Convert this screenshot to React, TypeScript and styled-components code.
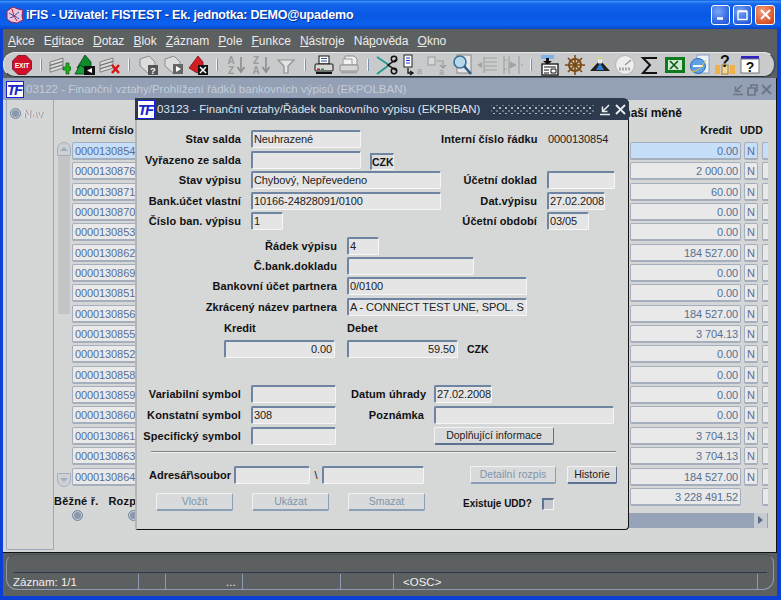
import React from "react";
import styled, { createGlobalStyle } from "styled-components";

const Global = createGlobalStyle`
  html, body { margin: 0; padding: 0; background: #5c6060; overflow: hidden; }
  body { font-family: "Liberation Sans", Arial, sans-serif; font-size: 11px; color: #111; }
`;

const Screen = styled.div`
  position: relative;
  width: 781px;
  height: 600px;
  display: flex;
  flex-direction: column;
  overflow: hidden;
  background: #0b3fd6;
`;

/* ---------- XP title bar ---------- */
const TitleBar = styled.header`
  height: 29px;
  flex: none;
  display: flex;
  align-items: center;
  padding: 0 6px 0 5px;
  background: linear-gradient(180deg, #0a56e0 0, #3a8ff6 5%, #1264ea 14%, #0a58e3 50%, #0b62ee 85%, #0846c8 100%);
`;
const AppTitle = styled.span`
  margin-left: 1px;
  flex: 1;
  color: #fff;
  font-weight: 700;
  font-size: 12.5px;
  letter-spacing: -0.2px;
  text-shadow: 1px 1px 0 #0a2f9a;
`;
const CaptionButtons = styled.div`
  display: flex;
  gap: 3px;
`;
const CaptionButton = styled.div<{ $close?: boolean }>`
  width: ${(p) => (p.$close ? 20 : 19)}px;
  height: 20px;
  box-sizing: border-box;
  border: 1px solid #fff;
  border-radius: 3px;
  display: flex;
  align-items: center;
  justify-content: center;
  background: ${(p) =>
    p.$close
      ? "radial-gradient(circle at 35% 30%, #f2a080 0, #e0643a 55%, #c63a14 100%)"
      : "radial-gradient(circle at 35% 30%, #7ba6f5 0, #3a70e6 55%, #1f4fd0 100%)"};
`;

/* ---------- menu ---------- */
const MenuBar = styled.nav`
  height: 23px;
  flex: none;
  margin: 0 4px 0 3px;
  display: flex;
  align-items: center;
  gap: 9.1px;
  padding-left: 5px;
  background: #5c6060;
  color: #ececec;
  font-size: 12px;
`;
const Under = styled.span`
  text-decoration: underline;
`;

/* ---------- toolbar ---------- */
const ToolbarWrap = styled.div`
  height: 26px;
  flex: none;
  margin: 0 4px 0 3px;
  padding-right: 1px;
  background: #5c6060;
`;
const Toolbar = styled.div`
  height: 25px;
  box-sizing: border-box;
  display: flex;
  align-items: center;
  padding-left: 5px;
  background: #c9cacb;
  border: 1px solid #e4e6e8;
  border-bottom: 1px solid #26313f;
  border-right: 2px solid #46505e;
  border-radius: 12px;
`;
const ToolSlot = styled.div`
  width: 25px;
  height: 22px;
  flex: none;
  display: flex;
  align-items: center;
  justify-content: center;
`;
const ToolSep = styled.div`
  width: 13px;
  flex: none;
  display: flex;
  justify-content: center;
  &::before {
    content: "";
    width: 1px;
    height: 12px;
    background: #7f92ad;
    border-left: 1px solid #f2f4f7;
  }
`;

/* ---------- MDI window ---------- */
const Client = styled.div`
  flex: 1;
  min-height: 0;
  display: flex;
  flex-direction: column;
  margin: 0 4px 4px 3px;
`;
const MdiWindow = styled.section`
  height: 475px;
  flex: none;
  box-sizing: border-box;
  display: flex;
  flex-direction: column;
  background: #d5d6d6;
  border-right: 1px solid #111;
  border-bottom: 1px solid #111;
`;
const MdiTitle = styled.div`
  height: 22px;
  flex: none;
  display: flex;
  align-items: center;
  padding: 0 3px 0 3px;
  background: #93a0b5;
  color: #c4ccd8;
  font-size: 11.5px;
  gap: 2px;
`;
const TitleText = styled.span`
  flex: 1;
  white-space: nowrap;
`;
const LogoBox = styled.span<{ $w: number; $h: number }>`
  width: ${(p) => p.$w}px;
  height: ${(p) => p.$h}px;
  box-sizing: border-box;
  flex: none;
  display: flex;
  align-items: center;
  justify-content: center;
  background: #fff;
  border: 1px solid #1a22d0;
  color: #1628c8;
  font: italic 700 15px/1 "Liberation Sans", Arial, sans-serif;
  letter-spacing: -2px;
  padding-right: 2px;
`;
const WindowButtons = styled.div<{ $gap: number }>`
  display: flex;
  align-items: center;
  gap: ${(p) => p.$gap}px;
`;

const MdiBody = styled.div`
  flex: 1;
  min-height: 0;
  display: flex;
  padding-left: 3px;
`;
const NavPanel = styled.aside`
  width: 48px;
  height: 450px;
  flex: none;
  box-sizing: border-box;
  border: 1px solid #9aa8c0;
  border-top: none;
  border-radius: 0 0 2px 2px;
  padding: 8px 0 0 3px;
  display: flex;
  align-items: flex-start;
  gap: 2px;
  color: #e6e8ec;
  font-size: 11px;
  line-height: 12px;
  text-shadow: 1px 0 0 #7d8a9e;
`;
const Radio = styled.span`
  display: inline-block;
  width: 11px;
  height: 11px;
  flex: none;
  box-sizing: border-box;
  border-radius: 50%;
  background: #8a98ac;
  border: 1px solid #7c8ba2;
  box-shadow: inset 0 0 0 1px #c7ced8;
`;
const GridArea = styled.div`
  margin-left: 3px;
  width: 711px;
  padding-top: 6px;
  display: flex;
  flex-direction: column;
`;
const HeadLine = styled.div`
  height: 14px;
  padding-right: 86px;
  text-align: right;
  font-weight: 700;
  font-size: 12px;
  line-height: 14px;
  white-space: nowrap;
`;
const ColumnHead = styled.div`
  margin-top: 3px;
  margin-bottom: 5px;
  height: 14px;
  padding-left: 15px;
  display: flex;
  font-weight: 700;
  font-size: 11px;
  line-height: 14px;
  white-space: nowrap;
`;
const HeadSpacer = styled.span`
  flex: 1;
`;
const HeadKredit = styled.span`
  width: 101px;
  text-align: right;
  padding-right: 8px;
`;
const HeadUdd = styled.span`
  width: 28px;
  font-size: 10.5px;
`;
const GridRows = styled.div`
  display: flex;
  align-items: flex-start;
  gap: 1px;
`;
const VScroll = styled.div`
  width: 14px;
  height: 345px;
  flex: none;
  display: flex;
  flex-direction: column;
`;
const ScrollArrow = styled.div<{ $down?: boolean }>`
  width: 14px;
  height: 14px;
  flex: none;
  box-sizing: border-box;
  background: #cdd0d4;
  border: 1px solid #a3aebf;
  border-radius: ${(p) => (p.$down ? "1px 1px 7px 7px" : "7px 7px 1px 1px")};
  display: flex;
  align-items: center;
  justify-content: center;
  margin-top: ${(p) => (p.$down ? "auto" : "0")};
  &::after {
    content: "";
    border-left: 4px solid transparent;
    border-right: 4px solid transparent;
    ${(p) => (p.$down ? "border-top: 4px solid #a2adbd;" : "border-bottom: 4px solid #a2adbd;")}
  }
`;
const VThumb = styled.div`
  width: 12px;
  height: 158px;
  margin: 0 1px;
  background: #c3c4c5;
`;
const Rows = styled.div`
  flex: 1;
  display: flex;
  flex-direction: column;
  gap: 2.35px;
`;
const Row = styled.div`
  height: 18px;
  display: flex;
`;
const Cell = styled.div<{ $w?: number; $active?: boolean; $right?: boolean; $empty?: boolean }>`
  width: ${(p) => p.$w ?? 64}px;
  height: 18px;
  flex: none;
  box-sizing: border-box;
  padding: 0 2px;
  line-height: 16px;
  font-size: 11px;
  letter-spacing: -0.1px;
  color: #566f94;
  text-align: ${(p) => (p.$right ? "right" : "left")};
  white-space: nowrap;
  overflow: hidden;
  background: ${(p) => (p.$active ? "#c7def9" : "#e9e9ea")};
  border: 1px solid #a4aebc;
  border-bottom: 2px solid #a4aebc;
  border-radius: 2px;
  visibility: ${(p) => (p.$empty ? "hidden" : "visible")};
`;
const RowGap = styled.span`
  flex: 1;
`;
const KreditCell = styled(Cell)`
  margin-right: 3px;
`;
const FlagCell = styled(Cell)`
  margin-right: 4px;
  text-align: center;
`;
const TailCell = styled(Cell)`
  border-right: none;
  border-radius: 2px 0 0 2px;
`;
const RadioLabels = styled.div`
  width: 120px;
  margin: 0 0 -2px -18px;
  display: flex;
  gap: 10px;
  align-items: flex-end;
  font-weight: 700;
  font-size: 11px;
  letter-spacing: 0.2px;
  line-height: 14px;
  white-space: nowrap;
`;
const BottomRow = styled.div`
  margin-top: 7px;
  height: 15px;
  display: flex;
  align-items: flex-start;
`;
const RadioSlot = styled.div`
  width: 56px;
  height: 11px;
  margin-top: -3px;
  flex: none;
  &:first-child {
    margin-left: 15px;
  }
`;
const HScroll = styled.div`
  flex: 1;
  height: 15px;
  background: #96a3b8;
  display: flex;
  justify-content: flex-end;
`;
const HArrow = styled.div`
  width: 13px;
  height: 15px;
  margin-right: 1px;
  background: #c6cbd2;
  display: flex;
  align-items: center;
  justify-content: center;
  &::after {
    content: "";
    border-top: 4px solid transparent;
    border-bottom: 4px solid transparent;
    border-left: 5px solid #5a6b86;
  }
`;

/* ---------- status bar ---------- */
const StatusBar = styled.footer`
  flex: 1;
  min-height: 0;
  background: #5c6060;
  padding: 1px 3px 0 3px;
`;
const StatusFrame = styled.div`
  height: 36px;
  box-sizing: border-box;
  padding: 17px 6px 0 6px;
  border: 1px solid #8c9bb0;
  border-top: 1px solid #47505c;
  border-radius: 9px 9px 11px 11px;
`;
const StatusCells = styled.div`
  height: 17px;
  border-top: 1px solid #2c3748;
  display: flex;
  color: #f0f0f0;
  font-size: 11.5px;
  line-height: 18px;
`;
const StatusCell = styled.div<{ $w: number; $pad?: number }>`
  width: ${(p) => p.$w}px;
  flex: none;
  box-sizing: border-box;
  padding-left: ${(p) => p.$pad ?? 0}px;
  height: 15px;
  margin-top: 1px;
  line-height: 16px;
  border-right: 1px solid #8c9bb0;
  white-space: nowrap;
`;

/* ---------- dialog ---------- */
const Dialog = styled.section`
  position: absolute;
  left: 135px;
  top: 98px;
  width: 494px;
  height: 432px;
  box-sizing: border-box;
  display: flex;
  flex-direction: column;
  background: #d6d7d7;
  border-left: 2px solid #b3b5b8;
  border-right: 1px solid #111;
  border-bottom: 1px solid #111;
  border-radius: 0 6px 4px 2px;
`;
const DialogTitle = styled.div`
  height: 22px;
  margin-left: -2px;
  margin-right: -1px;
  flex: none;
  display: flex;
  align-items: center;
  padding: 0 3px 0 2px;
  gap: 2px;
  background: #2d394c;
  color: #dfe4ea;
  font-size: 11.5px;
  border-radius: 0 6px 0 0;
  white-space: nowrap;
`;
const DotStrip = styled.span`
  width: 104px;
  height: 9px;
  margin-left: 9px;
  margin-right: 2px;
  flex: none;
  background-image: radial-gradient(circle, #aab3c0 0.8px, transparent 1px),
    radial-gradient(circle, #6b7789 0.8px, transparent 1px);
  background-size: 6px 6px;
  background-position: 0 0, 3px 3px;
`;
const Section = styled.div<{ $top: number; $left?: number }>`
  padding-top: ${(p) => p.$top}px;
  padding-left: ${(p) => p.$left ?? 0}px;
  display: flex;
`;
const Stack = styled.div<{ $gap: number; $w?: number }>`
  display: flex;
  flex-direction: column;
  gap: ${(p) => p.$gap}px;
  flex: none;
  ${(p) => (p.$w ? `width: ${p.$w}px;` : "")}
`;
const FieldRow = styled.div`
  height: 18px;
  display: flex;
  align-items: center;
`;
const Label = styled.label<{ $w: number }>`
  width: ${(p) => p.$w}px;
  flex: none;
  margin-right: 10px;
  text-align: right;
  font-weight: 700;
  font-size: 11px;
  letter-spacing: 0.1px;
  line-height: 14px;
  white-space: nowrap;
`;
const Field = styled.div<{ $w: number; $right?: boolean }>`
  width: ${(p) => p.$w}px;
  height: 18px;
  flex: none;
  box-sizing: border-box;
  padding: 0 2px 0 1px;
  line-height: 15px;
  font-size: 11px;
  letter-spacing: -0.1px;
  color: #222;
  background: #e5e5e6;
  text-align: ${(p) => (p.$right ? "right" : "left")};
  white-space: nowrap;
  overflow: hidden;
  border-top: 2px solid #6f84a3;
  border-left: 2px solid #6f84a3;
  border-right: 1px solid #f6f6f6;
  border-bottom: 1px solid #f6f6f6;
  border-radius: 2px;
`;
const PlainValue = styled.span`
  margin-left: 1px;
  font-size: 11px;
  letter-spacing: -0.1px;
  color: #222;
`;
const CurrencyBox = styled.div`
  margin: 4px 0 0 9px;
  width: 24px;
  height: 17px;
  box-sizing: border-box;
  text-align: center;
  font-weight: 700;
  font-size: 10.5px;
  line-height: 14px;
  background: #dcdcdd;
  border-top: 2px solid #6f84a3;
  border-left: 2px solid #6f84a3;
  border-right: 1px solid #f6f6f6;
  border-bottom: 1px solid #f6f6f6;
`;
const HeadingRow = styled.div`
  padding: 5px 0 5px 87px;
  display: flex;
  font-weight: 700;
  font-size: 11px;
  line-height: 14px;
`;
const HeadingCell = styled.span<{ $w: number }>`
  width: ${(p) => p.$w}px;
`;
const AmountRow = styled.div`
  padding-left: 87px;
  display: flex;
  align-items: center;
  gap: 12px;
`;
const Unit = styled.span`
  margin-left: -3px;
  font-weight: 700;
  font-size: 10.5px;
`;
const Divider = styled.hr`
  margin: 6px 12px 0 14px;
  height: 1px;
  border: none;
  background: #7c7f84;
  box-shadow: 0 1px 0 #f2f2f2;
`;
const FileRow = styled.div`
  padding: 14px 0 0 12px;
  height: 18px;
  display: flex;
  align-items: center;
`;
const FileLabel = styled.label`
  width: 85px;
  flex: none;
  font-weight: 700;
  font-size: 11px;
  white-space: nowrap;
`;
const Backslash = styled.span`
  width: 12px;
  flex: none;
  text-align: center;
`;
const Btn = styled.button<{ $w: number; $off?: boolean; $left?: number }>`
  width: ${(p) => p.$w}px;
  height: 18px;
  flex: none;
  padding: 0;
  margin-left: ${(p) => p.$left ?? 0}px;
  background: #d9dadb;
  font: 10.5px/1 "Liberation Sans", Arial, sans-serif;
  color: ${(p) => (p.$off ? "#8194ac" : "#222")};
  border-top: 1px solid #f2f2f2;
  border-left: 1px solid #f2f2f2;
  border-right: 1px solid ${(p) => (p.$off ? "#8c9db6" : "#5d7290")};
  border-bottom: 2px solid ${(p) => (p.$off ? "#8c9db6" : "#5d7290")};
  border-radius: 2px;
`;
const ActionRow = styled.div`
  padding: 9px 0 0 19px;
  display: flex;
  align-items: flex-start;
  gap: 19px;
`;
const UddGroup = styled.div`
  margin: 5px 0 0 19px;
  display: flex;
  align-items: center;
  gap: 10px;
  font-weight: 700;
  font-size: 10px;
`;
const CheckBox = styled.span`
  width: 12px;
  height: 12px;
  box-sizing: border-box;
  background: #c5c8cc;
  border-top: 2px solid #60748f;
  border-left: 2px solid #60748f;
  border-right: 1px solid #f4f4f4;
  border-bottom: 1px solid #f4f4f4;
`;

/* ---------- drawn icons ---------- */
const Ico: React.FC<{ children: React.ReactNode }> = ({ children }) => (
  <svg width="22" height="22" viewBox="0 0 22 22">
    {children}
  </svg>
);
const Stackd: React.FC<{ fill?: string; line?: string }> = ({ fill = "#d9d9d9", line = "#6d6d6d" }) => (
  <path
    d="M1 8l13-4v3.4L1 11.4zM1 11.4l13-4v3.4L1 14.8zM1 14.8l13-4v3.4L1 18.2z"
    fill={fill}
    stroke={line}
    strokeWidth="0.8"
  />
);
const GrayDoc = () => (
  <path d="M3 5l9-3 6 6v10l-6 2-9-8z" fill="#dcdcdc" stroke="#8b8b8b" strokeWidth="1" />
);

const icons: Record<string, React.ReactNode> = {
  exit: (
    <Ico>
      <path d="M7 1.5h8L20.5 7v8L15 20.5H7L1.5 15V7z" fill="#d0102a" stroke="#7a0a18" strokeWidth="0.8" />
      <text x="11" y="13.6" textAnchor="middle" fontSize="6.6" fontWeight="700" fill="#fff" fontFamily="Liberation Sans">
        EXIT
      </text>
    </Ico>
  ),
  add: (
    <Ico>
      <Stackd />
      <path d="M14 13h3v-4h3v4h2v3h-2v4h-3v-4h-3z" fill="#20b020" stroke="#0b5a0b" strokeWidth="0.7" />
    </Ico>
  ),
  dup: (
    <Ico>
      <path d="M3 14L11 1l6 7v6z" fill="#0f8a2a" stroke="#063d12" strokeWidth="0.8" />
      <path d="M1 20l5-9 6 4v5z" fill="#1aa03a" stroke="#063d12" strokeWidth="0.8" />
      <rect x="10" y="12" width="11" height="9" fill="#111" />
      <path d="M18 14v5l-5-2.5z" fill="#fff" />
    </Ico>
  ),
  del: (
    <Ico>
      <Stackd />
      <path d="M13 11l7 8M20 11l-7 8" stroke="#d81212" strokeWidth="2.4" />
    </Ico>
  ),
  qEnter: (
    <Ico>
      <GrayDoc />
      <rect x="11" y="11" width="10" height="10" fill="#555" />
      <text x="16" y="19.5" textAnchor="middle" fontSize="9.5" fontWeight="700" fill="#fff" fontFamily="Liberation Sans">
        ?
      </text>
    </Ico>
  ),
  qRun: (
    <Ico>
      <GrayDoc />
      <rect x="11" y="10" width="10" height="10" fill="#666" />
      <path d="M14 12l5 3-5 3z" fill="#fff" />
    </Ico>
  ),
  qCancel: (
    <Ico>
      <path d="M2 14L11 2l5 6v6l-6 5z" fill="#d41c24" stroke="#7a1014" strokeWidth="0.8" />
      <rect x="11" y="11" width="10" height="10" fill="#111" />
      <path d="M13 13l6 6M19 13l-6 6" stroke="#fff" strokeWidth="1.5" />
    </Ico>
  ),
  sortAz: (
    <Ico>
      <text x="6" y="10" textAnchor="middle" fontSize="10" fontWeight="700" fill="#9a9a9a" fontFamily="Liberation Sans">
        A
      </text>
      <text x="6" y="20" textAnchor="middle" fontSize="10" fontWeight="700" fill="#9a9a9a" fontFamily="Liberation Sans">
        Z
      </text>
      <path d="M16 3v13M12.5 13l3.5 5 3.5-5" fill="none" stroke="#8d8d8d" strokeWidth="1.6" />
    </Ico>
  ),
  sortZa: (
    <Ico>
      <text x="6" y="10" textAnchor="middle" fontSize="10" fontWeight="700" fill="#9a9a9a" fontFamily="Liberation Sans">
        Z
      </text>
      <text x="6" y="20" textAnchor="middle" fontSize="10" fontWeight="700" fill="#9a9a9a" fontFamily="Liberation Sans">
        A
      </text>
      <path d="M16 3v13M12.5 13l3.5 5 3.5-5" fill="none" stroke="#8d8d8d" strokeWidth="1.6" />
    </Ico>
  ),
  funnel: (
    <Ico>
      <path d="M3 6h16l-6 6v7h-4v-7z" fill="#e4e4e4" stroke="#8f8f8f" strokeWidth="1.2" />
    </Ico>
  ),
  printer: (
    <Ico>
      <rect x="6" y="2" width="10" height="8" fill="#fff" stroke="#111" />
      <path d="M8 4.5h6M8 7h6" stroke="#2c50a0" />
      <rect x="2" y="10" width="18" height="7" rx="1" fill="#d7d7d7" stroke="#111" />
      <rect x="4" y="14.5" width="3" height="1.5" fill="#c02020" />
      <rect x="8" y="14.5" width="3" height="1.5" fill="#20a020" />
      <rect x="3" y="18" width="16" height="2" fill="#111" />
    </Ico>
  ),
  printer2: (
    <Ico>
      <path d="M7 2h9l3 3v6H7z" fill="#eee" stroke="#8d8d8d" />
      <path d="M5 5h9v6H5z" fill="#f3f3f3" stroke="#999" />
      <rect x="2" y="11" width="18" height="6" rx="1" fill="#d7d7d7" stroke="#8a8a8a" />
      <rect x="3" y="17.5" width="16" height="2" fill="#a5a5a5" />
    </Ico>
  ),
  cut: (
    <Ico>
      <path d="M1 3l12 8-12 9" fill="none" stroke="#1d9a8c" strokeWidth="1.8" />
      <path d="M21 5l-9 6 9 6" fill="none" stroke="#111" strokeWidth="1.5" />
      <circle cx="18" cy="5" r="2.7" fill="none" stroke="#111" strokeWidth="1.5" />
      <circle cx="18" cy="17" r="2.7" fill="none" stroke="#111" strokeWidth="1.5" />
    </Ico>
  ),
  copy: (
    <Ico>
      <rect x="3" y="1" width="8" height="12" fill="#fff" stroke="#222" />
      <path d="M5 4h4M5 6.5h4M5 9h4" stroke="#2030d0" />
      <path d="M7 14v5h4M9 17l3 2-3 2" fill="none" stroke="#111" strokeWidth="1.3" />
      <text x="16" y="20" fontSize="9" fill="#999" fontFamily="Liberation Sans">
        a
      </text>
    </Ico>
  ),
  paste: (
    <Ico>
      <rect x="2" y="3" width="7" height="8" fill="#d8d8d8" stroke="#9a9a9a" />
      <path d="M11 7h6v7M14 11l3 3 3-3" fill="none" stroke="#999" strokeWidth="1.2" />
      <text x="13" y="21" fontSize="9" fill="#999" fontFamily="Liberation Sans">
        a
      </text>
    </Ico>
  ),
  search: (
    <Ico>
      <rect x="6" y="1" width="14" height="18" fill="#e6e6e6" stroke="#888" />
      <circle cx="9" cy="8" r="6" fill="#b5d7ea" stroke="#3c6f96" strokeWidth="1.6" />
      <path d="M13 12l7 8" stroke="#2e5f8c" strokeWidth="2.6" />
    </Ico>
  ),
  tree1: (
    <Ico>
      <path d="M8 3v16M8 4h13M8 8h13M8 12h13M8 16h13" fill="none" stroke="#a2a2a2" strokeWidth="1.2" />
      <path d="M1 11l5-3v6z" fill="#a2a2a2" />
    </Ico>
  ),
  tree2: (
    <Ico>
      <path d="M3 2v18M8 2v18M18 2v18M3 6h3M3 15h3" fill="none" stroke="#a2a2a2" strokeWidth="1.2" />
      <path d="M9 8l6 3-6 3zM20 11h2" fill="#a2a2a2" stroke="#a2a2a2" />
    </Ico>
  ),
  card: (
    <Ico>
      <rect x="2" y="1" width="13" height="4" fill="#7fb2e8" />
      <path d="M7 4h3v3h3l-4.500 4L4 7h3z" fill="#111" />
      <rect x="3" y="10" width="16" height="11" fill="#fff" stroke="#111" strokeWidth="1.3" />
      <path d="M5 13h12M5 16h5M12 15h5v4h-5zM5 19h5" fill="none" stroke="#111" />
    </Ico>
  ),
  wheel: (
    <Ico>
      <circle cx="11" cy="11" r="6" fill="none" stroke="#7c4a10" strokeWidth="2" />
      <path d="M11 1v20M1 11h20M4 4l14 14M18 4L4 18" stroke="#7c4a10" strokeWidth="1.6" />
    </Ico>
  ),
  tri: (
    <Ico>
      <path d="M1 17L11 6l10 11z" fill="#222" />
      <path d="M7 16l4-7 4 7z" fill="#2f7fd8" />
      <path d="M9 5L11 3l2 2M3 11l2-1M19 11l-2-1" stroke="#e8dc30" fill="none" />
      <rect x="9" y="5.500" width="4" height="4" fill="#e7e7e7" />
    </Ico>
  ),
  gauge: (
    <Ico>
      <circle cx="11" cy="11" r="9.500" fill="#ededed" stroke="#b5b5b5" />
      <path d="M11 11l6-5" stroke="#999" strokeWidth="1.4" />
      <path d="M5 15h12" stroke="#aaa" strokeWidth="3" strokeDasharray="2 1" />
    </Ico>
  ),
  sigma: (
    <Ico>
      <path d="M18 4H4l7 7-7 8h14" fill="none" stroke="#111" strokeWidth="2" />
    </Ico>
  ),
  excel: (
    <Ico>
      <rect x="1" y="3" width="20" height="16" fill="#0f7a1c" />
      <rect x="4" y="6" width="14" height="10" fill="#cfe8d2" />
      <path d="M6 7l8 8M14 7l-8 8" stroke="#0f5a18" strokeWidth="1.6" />
    </Ico>
  ),
  ie: (
    <Ico>
      <rect x="8" y="1" width="12" height="18" fill="#eef3fa" stroke="#8aa0bf" />
      <circle cx="9" cy="12" r="7.500" fill="#5fa0e6" stroke="#2b6cbc" />
      <path d="M4 12h10" stroke="#fff" strokeWidth="2" />
      <path d="M3 17c4 2 10-4 14-11" fill="none" stroke="#e6c040" />
    </Ico>
  ),
  help: (
    <Ico>
      <rect x="1" y="11" width="5" height="9" fill="#efb24a" />
      <rect x="8" y="11" width="6" height="9" fill="#efd8a0" stroke="#b57f20" />
      <rect x="16" y="11" width="5" height="9" fill="#efb24a" />
      <text x="11" y="13" textAnchor="middle" fontSize="16" fontWeight="700" fill="#111" fontFamily="Liberation Sans">
        ?
      </text>
    </Ico>
  ),
  about: (
    <Ico>
      <rect x="2" y="2" width="18" height="3" fill="#3020c0" />
      <rect x="2" y="5" width="18" height="14" fill="#fff" stroke="#777" />
      <text x="11" y="18" textAnchor="middle" fontSize="14" fontWeight="700" fill="#111" fontFamily="Liberation Sans">
        ?
      </text>
    </Ico>
  ),
};

const toolbarLayout = [
  "exit", "|", "add", "dup", "del", "|", "qEnter", "qRun", "qCancel", "|", "sortAz", "sortZa", "funnel", "|",
  "printer", "printer2", "|", "cut", "copy", "paste", "search", "tree1", "tree2", "|", "card", "wheel", "tri",
  "gauge", "sigma", "excel", "ie", "help", "about",
];

const menu: [string, string, string][] = [
  ["", "A", "kce"],
  ["E", "d", "itace"],
  ["", "D", "otaz"],
  ["", "B", "lok"],
  ["", "Z", "áznam"],
  ["", "P", "ole"],
  ["", "F", "unkce"],
  ["", "N", "ástroje"],
  ["Ná", "p", "ověda"],
  ["", "O", "kno"],
];

const records: [string, string][] = [
  ["0000130854", "0.00"],
  ["0000130876", "2 000.00"],
  ["0000130871", "60.00"],
  ["0000130870", "0.00"],
  ["0000130853", "0.00"],
  ["0000130862", "184 527.00"],
  ["0000130869", "0.00"],
  ["0000130851", "0.00"],
  ["0000130856", "184 527.00"],
  ["0000130855", "3 704.13"],
  ["0000130852", "0.00"],
  ["0000130858", "0.00"],
  ["0000130859", "0.00"],
  ["0000130860", "0.00"],
  ["0000130861", "3 704.13"],
  ["0000130863", "3 704.13"],
  ["0000130864", "184 527.00"],
];

const MiniGlyph: React.FC<{ d: string; color: string; w?: number }> = ({ d, color, w = 2 }) => (
  <svg width="13" height="13" viewBox="0 0 13 13">
    <path d={d} fill="none" stroke={color} strokeWidth={w} />
  </svg>
);

const minimizeArrow = "M1 11.500h10M10 2L4 8M3.500 3.500V8.500H8.500";

export default function App() {
  return (
    <Screen>
      <Global />
      <TitleBar>
        <svg width="20" height="18" viewBox="0 0 20 18">
          <path d="M2 5l6-4 5 2 5 1-1 6 1 4-6 3-6-1-4-3z" fill="#e8c8d8" stroke="#a02050" />
          <path d="M4 7l5 3 5-4M5 12l5-2 4 3" fill="none" stroke="#4050c0" />
          <path d="M7 3l2 7 3 5" fill="none" stroke="#c01848" />
        </svg>
        <AppTitle>iFIS - Uživatel: FISTEST - Ek. jednotka: DEMO@upademo</AppTitle>
        <CaptionButtons>
          <CaptionButton>
            <MiniGlyph d="M3 10.500h6" color="#fff" w={2.5} />
          </CaptionButton>
          <CaptionButton>
            <MiniGlyph d="M2 3.500h9v8H2zM2 3h9" color="#fff" w={1.4} />
          </CaptionButton>
          <CaptionButton $close>
            <MiniGlyph d="M2 2l9 9M11 2l-9 9" color="#fff" w={2} />
          </CaptionButton>
        </CaptionButtons>
      </TitleBar>

      <MenuBar>
        {menu.map(([a, b, c]) => (
          <span key={a + b + c}>
            {a}
            <Under>{b}</Under>
            {c}
          </span>
        ))}
      </MenuBar>

      <ToolbarWrap>
        <Toolbar>
          {toolbarLayout.map((name, i) =>
            name === "|" ? <ToolSep key={i} /> : <ToolSlot key={i}>{icons[name]}</ToolSlot>
          )}
        </Toolbar>
      </ToolbarWrap>

      <Client>
        <MdiWindow>
          <MdiTitle>
            <LogoBox $w={18} $h={17}>TF</LogoBox>
            <TitleText>03122 - Finanční vztahy/Prohlížení řádků bankovních výpisů (EKPOLBAN)</TitleText>
            <WindowButtons $gap={1}>
              <MiniGlyph d={minimizeArrow} color="#6d7685" w={1.6} />
              <MiniGlyph d="M2 5h7v7H2zM5 5V2h6v6H9" color="#6d7685" w={1.6} />
              <MiniGlyph d="M2 2l9 9M11 2l-9 9" color="#6d7685" w={2} />
            </WindowButtons>
          </MdiTitle>
          <MdiBody>
            <NavPanel>
              <Radio />
              Nav
            </NavPanel>
            <GridArea>
              <HeadLine>v naší měně</HeadLine>
              <ColumnHead>
                Interní číslo
                <HeadSpacer />
                <HeadKredit>Kredit</HeadKredit>
                <HeadUdd>UDD</HeadUdd>
              </ColumnHead>
              <GridRows>
                <VScroll>
                  <ScrollArrow />
                  <VThumb />
                  <ScrollArrow $down />
                </VScroll>
                <Rows>
                  {records.map(([id, amount], i) => (
                    <Row key={id}>
                      <Cell $active={i === 0} $w={120}>{id}</Cell>
                      <RowGap />
                      <KreditCell $active={i === 0} $w={111} $right>{amount}</KreditCell>
                      <FlagCell $w={14} $active={i === 0}>N</FlagCell>
                      <TailCell $w={6} $active={i === 0} />
                    </Row>
                  ))}
                  <Row>
                    <RadioLabels>
                      <span>Běžné ř.</span>
                      <span>Rozpis</span>
                    </RadioLabels>
                    <RowGap />
                    <KreditCell $w={111} $right>3 228 491.52</KreditCell>
                    <FlagCell $w={14} $empty />
                    <TailCell $w={6} />
                  </Row>
                </Rows>
              </GridRows>
              <BottomRow>
                <RadioSlot><Radio /></RadioSlot>
                <RadioSlot><Radio /></RadioSlot>
                <HScroll>
                  <HArrow />
                </HScroll>
              </BottomRow>
            </GridArea>
          </MdiBody>
        </MdiWindow>
        <StatusBar>
          <StatusFrame>
            <StatusCells>
              <StatusCell $w={126}>Záznam: 1/1</StatusCell>
              <StatusCell $w={27} />
              <StatusCell $w={77} $pad={60}>...</StatusCell>
              <StatusCell $w={98} />
              <StatusCell $w={53} />
              <StatusCell $w={364} $pad={9}>&lt;OSC&gt;</StatusCell>
            </StatusCells>
          </StatusFrame>
        </StatusBar>
      </Client>

      <Dialog>
        <DialogTitle>
          <LogoBox $w={18} $h={19}>TF</LogoBox>
          03123 - Finanční vztahy/Řádek bankovního výpisu (EKPRBAN)
          <DotStrip />
          <WindowButtons $gap={2}>
            <MiniGlyph d={minimizeArrow} color="#e8ecf0" w={1.5} />
            <MiniGlyph d="M2 2l9 9M11 2l-9 9" color="#e8ecf0" w={1.8} />
          </WindowButtons>
        </DialogTitle>

        <Section $top={10}>
          <Stack $gap={2.5} $w={304}>
            <FieldRow><Label $w={104}>Stav salda</Label><Field $w={110}>Neuhrazené</Field></FieldRow>
            <FieldRow><Label $w={104}>Vyřazeno ze salda</Label><Field $w={110} /><CurrencyBox>CZK</CurrencyBox></FieldRow>
            <FieldRow><Label $w={104}>Stav výpisu</Label><Field $w={190}>Chybový, Nepřevedeno</Field></FieldRow>
            <FieldRow><Label $w={104}>Bank.účet vlastní</Label><Field $w={190}>10166-24828091/0100</Field></FieldRow>
            <FieldRow><Label $w={104}>Číslo ban. výpisu</Label><Field $w={32}>1</Field></FieldRow>
          </Stack>
          <Stack $gap={2.5}>
            <FieldRow><Label $w={96}>Interní číslo řádku</Label><PlainValue>0000130854</PlainValue></FieldRow>
            <FieldRow />
            <FieldRow><Label $w={96}>Účetní doklad</Label><Field $w={68} /></FieldRow>
            <FieldRow><Label $w={96}>Dat.výpisu</Label><Field $w={58}>27.02.2008</Field></FieldRow>
            <FieldRow><Label $w={96}>Účetní období</Label><Field $w={42}>03/05</Field></FieldRow>
          </Stack>
        </Section>

        <Section $top={7}>
          <Stack $gap={2.2}>
            <FieldRow><Label $w={200}>Řádek výpisu</Label><Field $w={32}>4</Field></FieldRow>
            <FieldRow><Label $w={200}>Č.bank.dokladu</Label><Field $w={127} /></FieldRow>
            <FieldRow><Label $w={200}>Bankovní účet partnera</Label><Field $w={180}>0/0100</Field></FieldRow>
            <FieldRow><Label $w={200}>Zkrácený název partnera</Label><Field $w={180}>A - CONNECT TEST UNE, SPOL. S</Field></FieldRow>
          </Stack>
        </Section>

        <HeadingRow>
          <HeadingCell $w={123}>Kredit</HeadingCell>
          <HeadingCell $w={60}>Debet</HeadingCell>
        </HeadingRow>
        <AmountRow>
          <Field $w={111} $right>0.00</Field>
          <Field $w={111} $right>59.50</Field>
          <Unit>CZK</Unit>
        </AmountRow>

        <Section $top={27}>
          <Stack $gap={3} $w={214}>
            <FieldRow><Label $w={104}>Variabilní symbol</Label><Field $w={85} /></FieldRow>
            <FieldRow><Label $w={104}>Konstatní symbol</Label><Field $w={85}>308</Field></FieldRow>
            <FieldRow><Label $w={104}>Specifický symbol</Label><Field $w={85} /></FieldRow>
          </Stack>
          <Stack $gap={3}>
            <FieldRow><Label $w={73}>Datum úhrady</Label><Field $w={58}>27.02.2008</Field></FieldRow>
            <FieldRow><Label $w={73}>Poznámka</Label><Field $w={180} /></FieldRow>
            <FieldRow><Label $w={73} /><Btn $w={120}>Doplňující informace</Btn></FieldRow>
          </Stack>
        </Section>

        <Divider />

        <FileRow>
          <FileLabel>Adresář\soubor</FileLabel>
          <Field $w={76} />
          <Backslash>\</Backslash>
          <Field $w={102} />
          <Btn $w={86} $off $left={46}>Detailní rozpis</Btn>
          <Btn $w={50} $left={11}>Historie</Btn>
        </FileRow>

        <ActionRow>
          <Btn $w={77} $off>Vložit</Btn>
          <Btn $w={77} $off>Ukázat</Btn>
          <Btn $w={77} $off>Smazat</Btn>
          <UddGroup>
            Existuje UDD?
            <CheckBox />
          </UddGroup>
        </ActionRow>
      </Dialog>
    </Screen>
  );
}
